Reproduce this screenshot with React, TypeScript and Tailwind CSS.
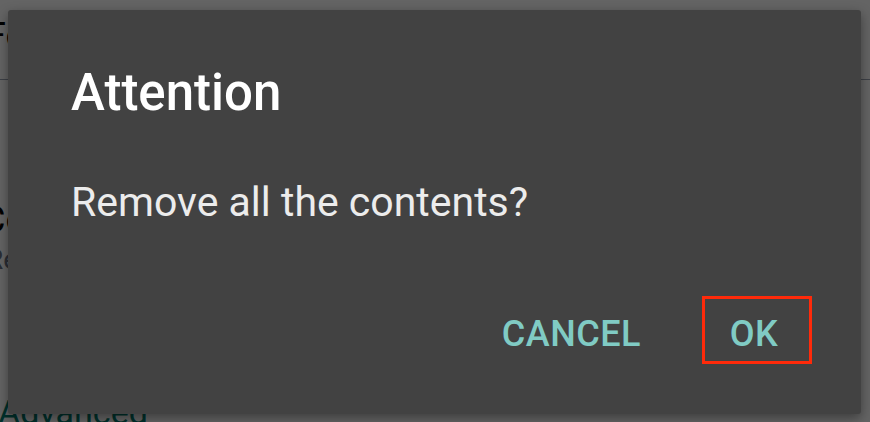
import { ReactElement } from "react";

export default function App(): ReactElement {
  return (
    <div
      className="relative h-[422px] w-[870px] overflow-hidden bg-[#fafafa]"
      style={{ fontFamily: "Roboto, 'Noto Sans', sans-serif" }}
    >
      {/* page underneath the dialog */}
      <div className="flex flex-col text-black">
        <div className="h-[80px] border-b border-gray-400 pt-[14px] -ml-[14px] text-[36px] leading-[44px]">
          Folder
        </div>
        <div className="mt-[118px] -ml-[18px] text-[36px] leading-[44px]">Contents</div>
        <div className="-ml-[14px] text-[28px] leading-[36px] text-gray-500">Remove</div>
        <div className="mt-[114px] -ml-[2px] text-[34px] leading-[40px] text-[#00796b]">Advanced</div>
      </div>

      {/* scrim */}
      <div className="absolute inset-0 bg-black/60" />

      {/* dialog */}
      <div className="absolute top-[10px] left-[8px] flex h-[404px] w-[853px] flex-col rounded-[3px] bg-[#424242] shadow-[0_4px_12px_rgba(0,0,0,0.4)]">
        <h2 className="pt-[53px] pl-[63px] text-[51px] leading-[60px] font-medium text-white">
          Attention
        </h2>
        <p className="mt-[55px] pl-[63px] text-[41px] leading-[48px] text-[#ececec]">
          Remove all the contents?
        </p>
        <div className="mt-auto mb-[50px] flex items-center justify-end gap-[61px] pr-[49px]">
          <button className="pt-[8px] text-[36px] leading-[42px] font-medium tracking-[0.5px] text-[#80cbc4]">
            CANCEL
          </button>
          <button className="flex h-[68px] w-[110px] items-center justify-center border-[3px] border-[#ff2a0a] pt-[8px] pr-[6px] text-[36px] leading-[42px] font-medium tracking-[0.5px] text-[#80cbc4]">
            OK
          </button>
        </div>
      </div>
    </div>
  );
}
